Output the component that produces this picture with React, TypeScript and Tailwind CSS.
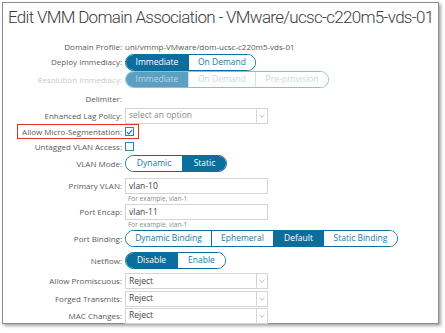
import { ReactNode } from 'react';

type Seg = { label: string; w: number; active?: boolean };

const FONT = { fontFamily: '"Open Sans", "Liberation Sans", sans-serif' };

function Label({ children, disabled }: { children: ReactNode; disabled?: boolean }) {
  return (
    <div
      className={`w-[122px] shrink-0 pr-[3px] text-right text-[8px] leading-none ${
        disabled ? 'text-[#c9c9c9]' : 'text-[#5a5a5a]'
      }`}
    >
      {children}
    </div>
  );
}

function Toggle({ segs, disabled }: { segs: Seg[]; disabled?: boolean }) {
  return (
    <div
      className={`flex h-[17px] overflow-hidden rounded-full border ${
        disabled ? 'border-[#8bbdd6]' : 'border-[#0b6e9c]'
      }`}
    >
      {segs.map((s, i) => (
        <div
          key={s.label}
          style={{ width: s.w }}
          className={`flex items-center justify-center text-[8.5px] ${
            i > 0 ? (disabled ? 'border-l border-[#cfe2ec]' : 'border-l border-[#0b6e9c]') : ''
          } ${
            s.active
              ? disabled
                ? 'bg-[#5d9fc0] text-[#b7d5e4]'
                : 'bg-[#0b6e9c] text-white'
              : disabled
                ? 'bg-white text-[#c7d9e3]'
                : 'bg-white text-[#1b78a8]'
          }`}
        >
          {s.label}
        </div>
      ))}
    </div>
  );
}

function Select({ value, placeholder }: { value?: string; placeholder?: string }) {
  return (
    <div className="flex h-[16px] w-[143px] border border-[#d4d4d4] bg-white">
      <div
        className={`flex flex-1 items-center pl-[3px] text-[8.5px] ${
          value ? 'text-[#444]' : 'text-[#8a8a8a]'
        }`}
      >
        {value ?? placeholder}
      </div>
      <div className="flex w-[11px] items-center justify-center border-l border-[#d4d4d4]">
        <svg width="6" height="4" viewBox="0 0 6 4">
          <path d="M0.5 0.8 L3 3.2 L5.5 0.8" fill="none" stroke="#9aa9b2" strokeWidth="0.8" />
        </svg>
      </div>
    </div>
  );
}

function Input({ value }: { value: string }) {
  return (
    <div className="flex h-[16px] w-[143px] items-center border border-[#d4d4d4] bg-white pl-[3px] text-[8.5px] text-[#444]">
      {value}
    </div>
  );
}

function Check({ checked }: { checked?: boolean }) {
  return (
    <div className="flex h-[9px] w-[9px] items-center justify-center border border-[#2a86b8] bg-white">
      {checked && (
        <svg width="7" height="6" viewBox="0 0 7 6">
          <path d="M0.8 3.1 L2.7 4.9 L6.2 0.9" fill="none" stroke="#1b78a8" strokeWidth="1.1" />
        </svg>
      )}
    </div>
  );
}

function Row({
  label,
  children,
  h,
  disabled,
  className = '',
}: {
  label: string;
  children?: ReactNode;
  h: number;
  disabled?: boolean;
  className?: string;
}) {
  return (
    <div className={`flex items-center ${className}`} style={{ height: h }}>
      <Label disabled={disabled}>{label}</Label>
      {children}
    </div>
  );
}

export default function App() {
  return (
    <div className="h-[333px] w-[445px] bg-white pl-[2px] pt-[2px]" style={FONT}>
      <div className="h-[322px] w-[437px] border border-[#8c8c8c] bg-white shadow-[2px_2px_3px_rgba(0,0,0,0.35)]">
        <h1
          className="whitespace-nowrap pl-[5px] pt-[2px] text-[17px] font-light leading-[24px] tracking-[-0.7px] text-[#3c3c3c]"
          style={{ fontFamily: 'Roboto, "Open Sans", sans-serif' }}
        >
          Edit VMM Domain Association - VMware/ucsc-c220m5-vds-01
        </h1>

        <div className="mt-[11px] flex flex-col">
          <Row label="Domain Profile:" h={13}>
            <span className="text-[8px] leading-none text-[#5a5a5a]">uni/vmmp-VMware/dom-ucsc-c220m5-vds-01</span>
          </Row>
          <Row label="Deploy Immediacy:" h={18}>
            <Toggle
              segs={[
                { label: 'Immediate', w: 62, active: true },
                { label: 'On Demand', w: 67 },
              ]}
            />
          </Row>
          <Row label="Resolution Immediacy:" h={17} disabled>
            <Toggle
              disabled
              segs={[
                { label: 'Immediate', w: 62, active: true },
                { label: 'On Demand', w: 67 },
                { label: 'Pre-provision', w: 73 },
              ]}
            />
          </Row>
          <Row label="Delimiter:" h={19} className="pt-[2px]" />
          <Row label="Enhanced Lag Policy:" h={17}>
            <Select placeholder="select an option" />
          </Row>
          <div className="relative">
            <Row label="Allow Micro-Segmentation:" h={15}>
              <Check checked />
            </Row>
            <div className="pointer-events-none absolute left-[14px] top-0 h-[15px] w-[122px] border-[1.5px] border-[#e0312c]" />
          </div>
          <Row label="Untagged VLAN Access:" h={15}>
            <Check />
          </Row>
          <Row label="VLAN Mode:" h={19}>
            <Toggle
              segs={[
                { label: 'Dynamic', w: 56 },
                { label: 'Static', w: 44, active: true },
              ]}
            />
          </Row>
          <div className="mt-[5px]">
            <Row label="Primary VLAN:" h={16}>
              <Input value="vlan-10" />
            </Row>
            <div className="pl-[125px] text-[6.5px] leading-[9px] text-[#8a8a8a]">For example, vlan-1</div>
          </div>
          <div className="mt-[1px]">
            <Row label="Port Encap:" h={16}>
              <Input value="vlan-11" />
            </Row>
            <div className="pl-[125px] text-[6.5px] leading-[9px] text-[#8a8a8a]">For example, vlan-1</div>
          </div>
          <Row label="Port Binding:" h={19}>
            <Toggle
              segs={[
                { label: 'Dynamic Binding', w: 85 },
                { label: 'Ephemeral', w: 62 },
                { label: 'Default', w: 50, active: true },
                { label: 'Static Binding', w: 74 },
              ]}
            />
          </Row>
          <div className="mt-[3px]">
            <Row label="Netflow:" h={19}>
              <Toggle
                segs={[
                  { label: 'Disable', w: 51, active: true },
                  { label: 'Enable', w: 48 },
                ]}
              />
            </Row>
          </div>
          <div className="mt-[2px]">
            <Row label="Allow Promiscuous:" h={18}>
              <Select value="Reject" />
            </Row>
            <Row label="Forged Transmits:" h={17}>
              <Select value="Reject" />
            </Row>
            <Row label="MAC Changes:" h={17}>
              <Select value="Reject" />
            </Row>
          </div>
        </div>
      </div>
    </div>
  );
}
